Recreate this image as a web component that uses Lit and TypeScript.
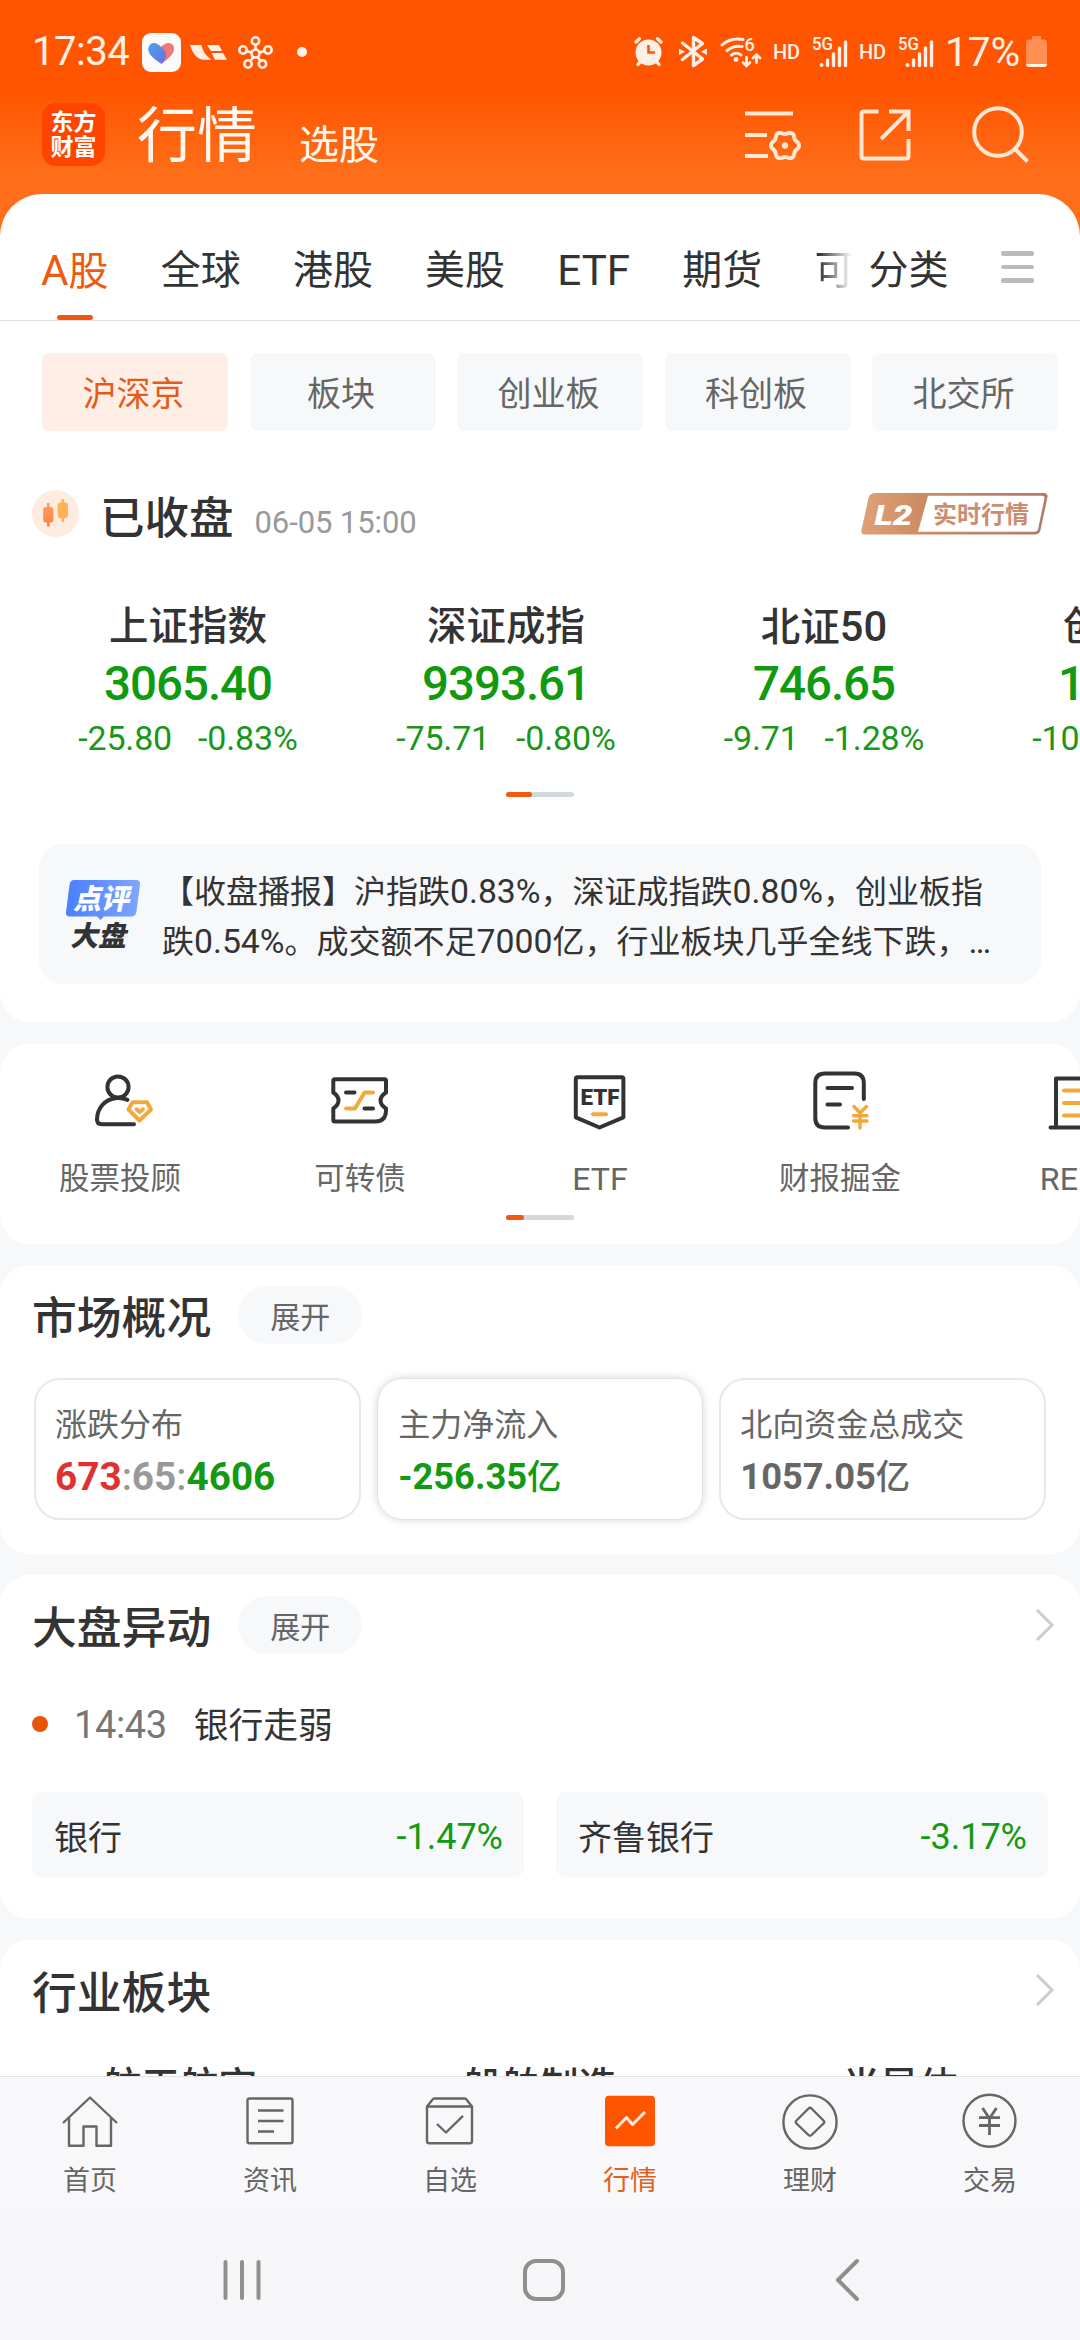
import { LitElement, html, svg, css } from "lit";
import { customElement } from "lit/decorators.js";
import { classMap } from "lit/directives/class-map.js";

/* Latin runs are set slightly larger than the ideographs around them. */
const mix = (text: string) =>
  text
    .split(/([\x21-\x7e…]+)/)
    .filter((part) => part)
    .map((part) => (/^[\x21-\x7e…]/.test(part) ? html`<span class="latin">${part}</span>` : part));

const gear = (cx: number, cy: number, r: number) =>
  Array.from({ length: 72 }, (_, i) => {
    const a = (i * Math.PI) / 36;
    const d = r + 1.3 * Math.cos(6 * a);
    return `${(cx + d * Math.cos(a)).toFixed(2)},${(cy + d * Math.sin(a)).toFixed(2)}`;
  }).join(" ");

const tabs = ["全球", "港股", "美股", "ETF", "期货"];
const chips = ["沪深京", "板块", "创业板", "科创板", "北交所"];
const indices = [
  { name: "上证指数", value: "3065.40", diff: "-25.80", pct: "-0.83%" },
  { name: "深证成指", value: "9393.61", diff: "-75.71", pct: "-0.80%" },
  { name: "北证50", value: "746.65", diff: "-9.71", pct: "-1.28%" },
  { name: "创业板指", value: "1850.37", diff: "-10.03", pct: "-0.54%" },
];

const quick = [
  {
    label: "股票投顾",
    icon: svg`<circle class="k" cx="118" cy="1087" r="10.6"/>
      <path class="k" d="M127.5 1099.8Q122.5 1097.6 117 1098C104 1099 97 1109 97 1119.5Q97 1124.3 102 1124.3H134"/>
      <path class="g" d="M132.5 1102.2H147L151 1109.5L139.5 1120.5L128.5 1109.5Z"/>
      <path class="g" d="M136.5 1109.3L139.8 1112L143 1109.3"/>`,
  },
  {
    label: "可转债",
    icon: svg`<path class="k" d="M335 1079.3H384.5Q386 1079.3 386 1080.8V1092.5Q380.5 1096 380.5 1100.5T386 1108.5V1111Q385.5 1121.5 375.5 1121.5H335Q333.3 1121.5 333.3 1120V1108.5Q338.5 1105 338.5 1100.5T333.3 1092.5V1080.8Q333.3 1079.3 335 1079.3Z"/>
      <path class="k" d="M346 1092.5H354.5M364.5 1108.5H373"/>
      <path class="g" d="M346 1108.5H355L364.5 1092.5H373"/>`,
  },
  {
    label: "ETF",
    icon: svg`<path class="k" d="M577.5 1077.3H622Q623.4 1077.3 623.4 1078.8V1117.3L599.5 1127.5L575.8 1117.3V1078.8Q575.8 1077.3 577.5 1077.3Z"/>
      <text class="etf" x="580.5" y="1105" textLength="39" lengthAdjust="spacingAndGlyphs">ETF</text>
      <path class="g" d="M593 1114.3H606"/>`,
  },
  {
    label: "财报掘金",
    icon: svg`<path class="k" d="M863.8 1099V1083Q863.8 1073.5 854.5 1073.5H825Q815.3 1073.5 815.3 1083V1118Q815.3 1127.5 825 1127.5H848"/>
      <path class="k" d="M827.5 1088H852M827.5 1104.5H840"/>
      <path class="g thin" d="M854 1106.5L860 1113L866.5 1106.5M860 1113V1128M853.5 1115.7H867M853.5 1121H867"/>`,
  },
  {
    label: "REITs",
    icon: svg`<path class="k" d="M1050.5 1127.5H1110M1056 1127V1078.5H1104V1127"/>
      <path class="g" d="M1064 1090.5H1096M1064 1103H1096M1064 1115.5H1096"/>`,
  },
];

const nav = [
  { label: "首页", icon: svg`<path d="M63 2123L90 2097.5L117 2123M69 2118V2145.8H83.5V2126.5H96.5V2145.8H111V2118"/>` },
  {
    label: "资讯",
    icon: svg`<rect x="247.5" y="2098.5" width="45" height="44.8" rx="2"/><path d="M258 2110.5H283.5M258 2121H283.5M258 2131.5H274"/>`,
  },
  {
    label: "自选",
    icon: svg`<path d="M427 2106.5L433 2099Q433.5 2098.5 434.5 2098.5H464.5Q465.5 2098.5 466 2099L472 2106.5V2141Q472 2143.3 470 2143.3H429Q427 2143.3 427 2141ZM427 2106.5H472M437 2124L446 2132.5L463 2115.8"/>`,
  },
  {
    label: "行情",
    active: true,
    icon: svg`<rect class="fill" x="605" y="2095.7" width="50" height="50.6" rx="4"/><path class="line" d="M616 2128.5L626.5 2117.5L632.5 2124.5L645 2112"/>`,
  },
  {
    label: "理财",
    icon: svg`<circle cx="810" cy="2122" r="26.6"/><path d="M808.5 2108.5Q810 2107 811.5 2108.5L823.5 2120.5Q825 2122 823.5 2123.5L811.5 2135Q810 2136.5 808.5 2135L796.5 2123.5Q795 2122 796.5 2120.5Z"/>`,
  },
  {
    label: "交易",
    icon: svg`<circle cx="989.5" cy="2120.8" r="26"/><path class="yen" d="M982.5 2108L989.5 2118.5L996.5 2108M989.5 2118V2135M979 2117.7H1000M979 2125.5H1000"/>`,
  },
];

@customElement("app-root")
export class AppRoot extends LitElement {
  static styles = css`
    :host {
      display: block;
      width: 1080px;
      height: 2340px;
      overflow: hidden;
      font-family: Roboto, "Noto Sans CJK SC", sans-serif;
      color: #333;
      background: #f6f8fa;
    }
    * { box-sizing: border-box; }
    svg { display: block; flex: none; overflow: visible; }
    .screen { display: flex; flex-direction: column; height: 2340px; }
    .latin { font-size: 1.055em; }
    .content { flex: 1; min-height: 0; overflow: hidden; display: flex; flex-direction: column; gap: 21px; }
    .top { flex: none; background: linear-gradient(#ff5500 0, #ff5500 88px, #ff6e1a 175px, #ff6e1a 250px, #f6f8fa 250px); }

    .status { height: 104px; display: flex; align-items: center; padding: 0 32px; color: #fff0e6; }
    .clock { font-size: 40px; line-height: 48px; width: 110px; flex: none; letter-spacing: -0.5px; }
    .signals { display: flex; align-items: center; margin-left: auto; }
    .signals svg { margin-left: 10px; }
    .signals .battery { margin-left: 4px; }
    .percent { font-size: 40.5px; line-height: 48px; width: 77px; margin-left: 10px; }
    .hd { font: 500 20px Roboto, sans-serif; fill: #ffefe4; }
    .fiveg { font: 500 18px Roboto, sans-serif; fill: #ffefe4; }
    .hint { fill: #fff0e6; }
    .wire { fill: none; stroke: #fff0e6; stroke-linecap: round; }

    .header { height: 90px; padding: 0 42px 29px; display: flex; align-items: center; color: #fff8f0; }
    .brand {
      width: 63px; height: 63px; border-radius: 14px; background: #ff4400; color: #fff;
      font: 700 23px/25px "Noto Sans CJK SC", sans-serif; text-align: center; padding-top: 5px;
    }
    .title { font-size: 60px; line-height: 70px; margin-left: 32px; padding-top: 5px; }
    .subtitle { font-size: 40px; line-height: 48px; margin-left: 42px; padding-top: 23px; }
    .tools { margin-left: auto; display: flex; margin-right: 6px; }
    .tools svg { fill: none; stroke: #ffe6d2; stroke-width: 4; }

    .panel { background: #fff; border-radius: 42px 42px 30px 30px; height: 828px; overflow: hidden; }
    .tabs { height: 127px; border-bottom: 1px solid #dedede; display: flex; padding: 0 46px 0 41px; font-size: 40px; line-height: 154px; }
    .tab { margin-right: 52.2px; position: relative; white-space: nowrap; }
    .tab.on { color: #ee5a10; }
    .tab.on::after {
      content: ""; position: absolute; left: 50%; bottom: 0; width: 36px; height: 5px; margin-left: -18px;
      border-radius: 3px; background: #f0570f;
    }
    .fade { width: 40px; margin-right: 14px; background: linear-gradient(90deg, #333 10%, #fff 92%); -webkit-background-clip: text; background-clip: text; color: transparent; }
    .sort { display: flex; flex-direction: column; gap: 9px; margin-left: auto; padding-top: 57px; }
    .sort i { width: 33px; height: 4.5px; border-radius: 2px; background: #bbb; }

    .chips { display: flex; gap: 21.5px; margin: 32px 22px 0 42px; }
    .chip { flex: 1; height: 78px; line-height: 83px; padding-right: 3px; border-radius: 8px; text-align: center; background: #f7f8fa; color: #666; font-size: 34px; }
    .chip.on { background: #ffeee5; color: #e25c1a; }

    .session { display: flex; align-items: center; height: 48px; margin: 59px 32px 0; }
    .session h2 { font-size: 44.5px; line-height: 60px; font-weight: 500; margin: 10px 0 0 20px; }
    .session time { font-size: 31px; line-height: 40px; color: #999; margin: 18px 0 0 21px; letter-spacing: -0.1px; }
    .l2 { margin-left: auto; }
    .l2mark { font: italic 900 28px Roboto, sans-serif; fill: #fff; }
    .l2text { font: 700 24px "Noto Sans CJK SC", sans-serif; fill: #cb8d70; }

    .indices { display: flex; width: 1272px; margin: 62px 0 0 29px; }
    .index { width: 318px; flex: none; display: flex; flex-direction: column; align-items: center; }
    .name { font-size: 39.5px; line-height: 53px; height: 50px; font-weight: 500; }
    .value { font-size: 47.5px; line-height: 48px; margin-top: 10px; font-weight: 500; color: #0f9a0f; letter-spacing: -1px; }
    .delta { font-size: 34px; line-height: 40px; margin-top: 10px; display: flex; gap: 26px; color: #1a971a; letter-spacing: -0.15px; }
    .pager { width: 68px; height: 5px; border-radius: 3px; background: #d3d8dc; margin: 34px auto 0; display: flex; }
    .pager i { width: 26px; border-radius: 3px; background: #f0590f; }
    .pager.short { margin-top: 13px; }
    .pager.short i { width: 18px; }

    .notice { display: flex; width: 1002px; height: 140px; margin: 47px 0 0 39px; padding: 23px 0 0 26px; border-radius: 24px; background: #f7f8fa; }
    .notice svg { margin-top: 9px; }
    .notice p { margin: 0 0 0 21px; font-size: 32px; line-height: 49px; white-space: nowrap; }
    .stamp { font: 900 28px "Noto Sans CJK SC", sans-serif; }

    .card { background: #fff; border-radius: 30px; flex: none; overflow: hidden; }
    .quick { height: 200px; padding-top: 22px; margin-top: 1px; }
    .row { display: flex; width: 1200px; }
    .entry { width: 240px; text-align: center; font-size: 30.5px; line-height: 44px; color: #666; }
    .entry svg { margin-bottom: 23px; }
    .k, .g { fill: none; stroke: #333; stroke-width: 4; stroke-linecap: round; stroke-linejoin: round; }
    .g { stroke: #f2a93b; }
    .g.thin { stroke-width: 3.4; }
    .etf { font: 900 22px Roboto, sans-serif; fill: #333; }

    .head { display: flex; align-items: center; height: 58px; margin: 21px 0 0 32px; padding-right: 24px; }
    .head h2 { font-size: 44.8px; line-height: 58px; font-weight: 500; margin: 8px 0 0; white-space: nowrap; }
    .pill { width: 124px; height: 58px; line-height: 64px; border-radius: 29px; margin-left: 27px; text-align: center; background: #f7f8fa; color: #666; font-size: 30px; }
    .head svg { margin-left: auto; fill: none; stroke: #ccc; stroke-width: 3; }

    .overview { height: 289px; }
    .boxes { display: flex; gap: 16.5px; margin: 34px 34px 0; }
    .box { flex: 1; height: 142px; border: 2px solid #e8e8e8; border-radius: 26px; padding: 21px 0 0 19px; white-space: nowrap; }
    .box.raised { border: 1px solid #e2e2e2; padding: 22px 0 0 20px; box-shadow: 0 0 8px rgba(0, 0, 0, 0.16); }
    .box p { margin: 0; font-size: 32px; line-height: 48px; color: #666; }
    .box strong { display: block; font-size: 34.4px; line-height: 48px; margin-top: 4px; font-weight: 700; color: #666; }
    .box strong.ratio { font-size: 36.7px; color: #999; }
    .box .up { color: #e03131; }
    .box .down { color: #129a12; }
    .box .flat { color: #999; font-weight: 500; }
    .cn { font-weight: 500; }

    .moves { height: 344px; }
    .event { display: flex; align-items: center; height: 50px; margin: 46px 32px 0; }
    .event i { width: 16px; height: 16px; border-radius: 50%; background: #ea5504; margin-bottom: 2px; }
    .event time { font-size: 38px; line-height: 50px; color: #777; margin-left: 26px; letter-spacing: -0.4px; }
    .event span { font-size: 34.8px; line-height: 50px; margin: 2px 0 0 27px; }
    .movers { display: flex; gap: 32px; margin: 42px 32px 0; }
    .mover { flex: 1; height: 85px; line-height: 92px; border-radius: 10px; background: #f7f8fa; padding: 0 21px 0 22px; display: flex; justify-content: space-between; font-size: 34px; }
    .mover b { font-weight: 400; font-size: 36px; line-height: 91px; color: #129a12; }

    .industry { flex: 1; border-radius: 30px 30px 0 0; }
    .sectors { display: flex; margin-top: 43px; }
    .sectors span { width: 360px; text-align: center; font-size: 38.5px; line-height: 50px; font-weight: 500; }

    .nav { height: 138px; flex: none; display: flex; background: #f8f8fa; border-top: 1px solid #e2e2e2; padding-top: 15px; }
    .item { width: 180px; text-align: center; font-size: 27px; line-height: 36px; color: #666; }
    .item svg { fill: none; stroke: #666; stroke-width: 2.4; margin-bottom: 13px; stroke-linejoin: round; }
    .item.on { color: #e2601f; }
    .item .fill { fill: #ff5500; stroke: none; }
    .item .line { stroke: #ffe9da; stroke-width: 3; }
    .item .yen { stroke-width: 2.8; }
    .system { height: 126px; flex: none; display: flex; align-items: flex-start; background: #f6f6f8; padding-top: 42px; }
    .system svg { fill: none; stroke: #8f8f8f; stroke-width: 4; stroke-linecap: round; stroke-linejoin: round; }
  `;

  private bars(x: number) {
    return svg`<text class="fiveg" x="${x + 1}" y="50" textLength="21" lengthAdjust="spacingAndGlyphs">5G</text>
      <circle class="hint" cx="${x + 10.5}" cy="65" r="2"/>
      <path class="wire" stroke-width="3.4" d="M${x + 16.5} 60V65.5M${x + 22.5} 54V65.5M${x + 28.5} 48V65.5M${x + 34.5} 42V65.5"/>`;
  }

  private chevron() {
    return html`<svg width="22" height="34" viewBox="0 0 22 34"><path d="M3 2L18 17L3 32"/></svg>`;
  }

  private status() {
    return html`<div class="status">
      <span class="clock">17:34</span>
      <svg width="162" height="44" viewBox="142 30 162 44">
        <defs>
          <linearGradient id="hb" x1="0" y1="0" x2="1" y2="1"><stop offset="0" stop-color="#4aa3ee"/><stop offset="1" stop-color="#6b6fdc"/></linearGradient>
        </defs>
        <rect x="142" y="33" width="39" height="39" rx="9" fill="#fafafa"/>
        <path d="M161 47Q165 42.5 169.5 43Q174.5 44 174 50Q173 56 161.5 63.5Z" fill="#f07878"/>
        <path d="M161.5 47.5Q157.5 42.5 153 43Q148 44 148.3 50.5Q149.5 56.5 161.5 64Q166 60 166 55Q165.5 50.5 161.5 47.5Z" fill="url(#hb)"/>
        <path class="hint" d="M190 45H201.5Q203 54 211.5 59.8H204Q194.5 59.5 190 45ZM207 45H219L222 51H211ZM211.5 53H223L227 59.8H215Z"/>
        <g class="wire" stroke-width="2.6">
          <circle cx="255.5" cy="53.5" r="4"/><circle cx="255.5" cy="41" r="3.7"/><circle cx="243" cy="50" r="3.7"/>
          <circle cx="268" cy="50" r="3.7"/><circle cx="248" cy="64" r="3.7"/><circle cx="262.5" cy="64" r="3.7"/>
          <path d="M255.5 45V49M246.5 51L251.5 52.5M264.5 51L259.5 52.5M250.5 61L253 57.5M260.5 61L258 57.5"/>
        </g>
        <circle class="hint" cx="302" cy="52" r="5"/>
      </svg>
      <div class="signals">
        <svg width="32" height="40" viewBox="634 32 32 40">
          <circle class="hint" cx="649.5" cy="52.5" r="13"/>
          <path class="wire" stroke-width="3.4" d="M637 42L640.5 38.8M662 42L658.5 38.8M641.5 61.5L639 64.5M657.5 61.5L660 64.5"/>
          <path d="M649.5 45V52.5H656" fill="none" stroke="#ff5500" stroke-width="2.6"/>
        </svg>
        <svg width="34" height="40" viewBox="676 32 34 40">
          <path class="wire" stroke-width="3.4" stroke-linejoin="round" d="M683.5 43L703.5 59L694.5 65.5V37.5L703.5 43.5L683.5 59.5"/>
          <path class="hint" d="M680 48.5L686 51.8L680 55ZM708 48.5L702 51.8L708 55Z"/>
        </svg>
        <svg width="44" height="40" viewBox="721 32 44 40">
          <path class="wire" stroke-width="3" d="M724 45Q733 37 745 39.5M729 50.5Q735.5 45 744 46.5M733.5 55Q738 51.5 743 55"/>
          <circle class="hint" cx="738" cy="59.5" r="2.4"/>
          <text class="fiveg" x="746.5" y="50.5">6</text>
          <path class="wire" stroke-width="2.6" d="M748.5 57V65.5M745 62.5L748.5 66L752 62.5M758.5 63V55M755 58L758.5 54.5L762 58"/>
        </svg>
        <svg width="28" height="40" viewBox="772 32 28 40"><text class="hd" x="772" y="58.5" textLength="27">HD</text></svg>
        <svg width="38" height="40" viewBox="811 32 38 40">${this.bars(811)}</svg>
        <svg width="28" height="40" viewBox="858 32 28 40"><text class="hd" x="858" y="58.5" textLength="27">HD</text></svg>
        <svg width="38" height="40" viewBox="897 32 38 40">${this.bars(897)}</svg>
        <span class="percent">17%</span>
        <svg class="battery" width="22" height="40" viewBox="1027 32 22 40">
          <path d="M1033 36H1042V39.5H1045Q1048 39.5 1048 42.5V64H1027V42.5Q1027 39.5 1030 39.5H1033Z" fill="#ff8f52"/>
          <path d="M1027 64H1048Q1048 67 1045 67H1030Q1027 67 1027 64Z" fill="#fff0e6"/>
        </svg>
      </div>
    </div>`;
  }

  private header() {
    return html`<div class="header">
      <div class="brand">东方<br />财富</div>
      <span class="title">行情</span>
      <span class="subtitle">选股</span>
      <div class="tools">
        <svg width="287" height="60" viewBox="745 105 287 60">
          <path d="M745 113.5H793M745 135H767M745 156H768"/>
          <polygon points="${gear(785, 145.5, 12.8)}" stroke-linejoin="round"/>
          <circle cx="785" cy="145.5" r="3.2" fill="#ffe6d2" stroke="none"/>
          <path d="M878.5 111.5H864Q861.5 111.5 861.5 114V156Q861.5 158.5 864 158.5H906Q908.5 158.5 908.5 156V139M889 111.5H908.5V131M881 139L908 112"/>
          <circle cx="998" cy="132" r="23.8"/><path d="M1015 149L1027.5 161.5"/>
        </svg>
      </div>
    </div>`;
  }

  private panel() {
    return html`<div class="panel">
      <div class="tabs">
        <span class="tab on">${mix("A股")}</span>
        ${tabs.map((t) => html`<span class="tab">${mix(t)}</span>`)}
        <span class="fade">可</span>
        <span>分类</span>
        <div class="sort"><i></i><i></i><i></i></div>
      </div>
      <div class="chips">${chips.map((c, i) => html`<span class=${classMap({ chip: true, on: i === 0 })}>${c}</span>`)}</div>
      <div class="session">
        <svg width="48" height="48" viewBox="32 490 48 48">
          <defs>
            <linearGradient id="c1" x1="0" y1="0" x2="0" y2="1"><stop offset="0" stop-color="#ffa060"/><stop offset="1" stop-color="#ff8040"/></linearGradient>
          </defs>
          <circle cx="55.5" cy="513.5" r="23.5" fill="#ffece0"/>
          <path d="M47 503h2.6v4h1.4q2.4 0 2.4 2.500v10q0 3-2.4 3h-1.400v4h-2.600v-4h-1.400q-2.400 0-2.400-3v-10q0-2.500 2.400-2.500h1.400Z" fill="url(#c1)"/>
          <path d="M61.500 499h2.600v3.500h1.400q2.400 0 2.400 2.500v10q0 3-2.400 3h-1.400v4h-2.600v-4h-1.400q-2.400 0-2.400-3v-10q0-2.500 2.400-2.500h1.400Z" fill="#ffb155"/>
        </svg>
        <h2>已收盘</h2>
        <time>06-05 15:00</time>
        <svg class="l2" width="187" height="42" viewBox="861.5 493 187 42">
          <defs>
            <linearGradient id="l2" x1="0" y1="0" x2="1" y2="0"><stop offset="0" stop-color="#e0a177"/><stop offset="0.35" stop-color="#cc8963"/><stop offset="1" stop-color="#b07a6c"/></linearGradient>
          </defs>
          <path d="M876 493H1044Q1049 493 1047.8 498L1041 530Q1040 534.5 1035 534.5H866Q861 534.5 862 530L869 498Q870.5 493 876 493Z" fill="url(#l2)"/>
          <path d="M928.5 495.8H1042.5Q1045.5 495.8 1045 498.5L1038.5 529.5Q1038 531.8 1035 531.8H918.5Z" fill="#fff"/>
          <text class="l2mark" x="875" y="524.5" textLength="38" lengthAdjust="spacingAndGlyphs">L2</text>
          <text class="l2text" x="933.5" y="523">实时行情</text>
        </svg>
      </div>
      <div class="indices">
        ${indices.map(
          (x) => html`<div class="index">
            <span class="name">${mix(x.name)}</span><span class="value">${x.value}</span>
            <span class="delta"><span>${x.diff}</span><span>${x.pct}</span></span>
          </div>`
        )}
      </div>
      <div class="pager"><i></i></div>
      <div class="notice">
        <svg width="76" height="72" viewBox="65 876 76 72">
          <defs>
            <linearGradient id="bl" x1="0" y1="0" x2="1" y2="0"><stop offset="0" stop-color="#4a7fff"/><stop offset="1" stop-color="#7ea6ff"/></linearGradient>
          </defs>
          <path d="M74.5 880H136Q140.5 880 140 884.5L136.5 911.5Q135.8 916.5 131 916.5H104L100.5 920L97 916.5H70Q65.5 916.5 66 912L69.5 885Q70.2 880 74.5 880Z" fill="url(#bl)"/>
          <text class="stamp" transform="translate(73 909) skewX(-12)" fill="#fff" textLength="56">点评</text>
          <text class="stamp" transform="translate(70 945.5) skewX(-12)" fill="#333" textLength="56">大盘</text>
        </svg>
        <p>${mix("【收盘播报】沪指跌0.83%，深证成指跌0.80%，创业板指")}<br />${mix("跌0.54%。成交额不足7000亿，行业板块几乎全线下跌，…")}</p>
      </div>
    </div>`;
  }

  render() {
    return html`<div class="screen">
      <div class="content">
        <div class="top">${this.status()}${this.header()}${this.panel()}</div>
        <section class="card quick">
          <div class="row">
            ${quick.map(
              (q, i) => html`<div class="entry">
                <svg width="240" height="68" viewBox="${i * 240} 1066 240 68">${q.icon}</svg>${mix(q.label)}
              </div>`
            )}
          </div>
          <div class="pager short"><i></i></div>
        </section>
        <section class="card overview">
          <div class="head"><h2>市场概况</h2><span class="pill">展开</span></div>
          <div class="boxes">
            <div class="box"><p>涨跌分布</p><strong class="ratio"><span class="latin"><span class="up">673</span><span class="flat">:</span>65<span class="flat">:</span><span class="down">4606</span></span></strong></div>
            <div class="box raised"><p>主力净流入</p><strong class="down"><span class="latin">-256.35</span><span class="cn">亿</span></strong></div>
            <div class="box"><p>北向资金总成交</p><strong><span class="latin">1057.05</span><span class="cn">亿</span></strong></div>
          </div>
        </section>
        <section class="card moves">
          <div class="head"><h2>大盘异动</h2><span class="pill">展开</span>${this.chevron()}</div>
          <div class="event"><i></i><time>14:43</time><span>银行走弱</span></div>
          <div class="movers">
            <div class="mover">银行<b>-1.47%</b></div>
            <div class="mover">齐鲁银行<b>-3.17%</b></div>
          </div>
        </section>
        <section class="card industry">
          <div class="head"><h2>行业板块</h2>${this.chevron()}</div>
          <div class="sectors"><span>航天航空</span><span>船舶制造</span><span>半导体</span></div>
        </section>
      </div>
      <nav class="nav">
        ${nav.map(
          (n, i) => html`<div class=${classMap({ item: true, on: !!n.active })}>
            <svg width="180" height="58" viewBox="${i * 180} 2092 180 58">${n.icon}</svg>${n.label}
          </div>`
        )}
      </nav>
      <div class="system">
        <svg width="1080" height="50" viewBox="0 2256 1080 50">
          <path d="M225.5 2262V2298M242 2262V2298M258.5 2262V2298"/>
          <rect x="525" y="2261" width="38" height="38" rx="11"/>
          <path d="M857 2261L838 2280L857 2299"/>
        </svg>
      </div>
    </div>`;
  }
}
